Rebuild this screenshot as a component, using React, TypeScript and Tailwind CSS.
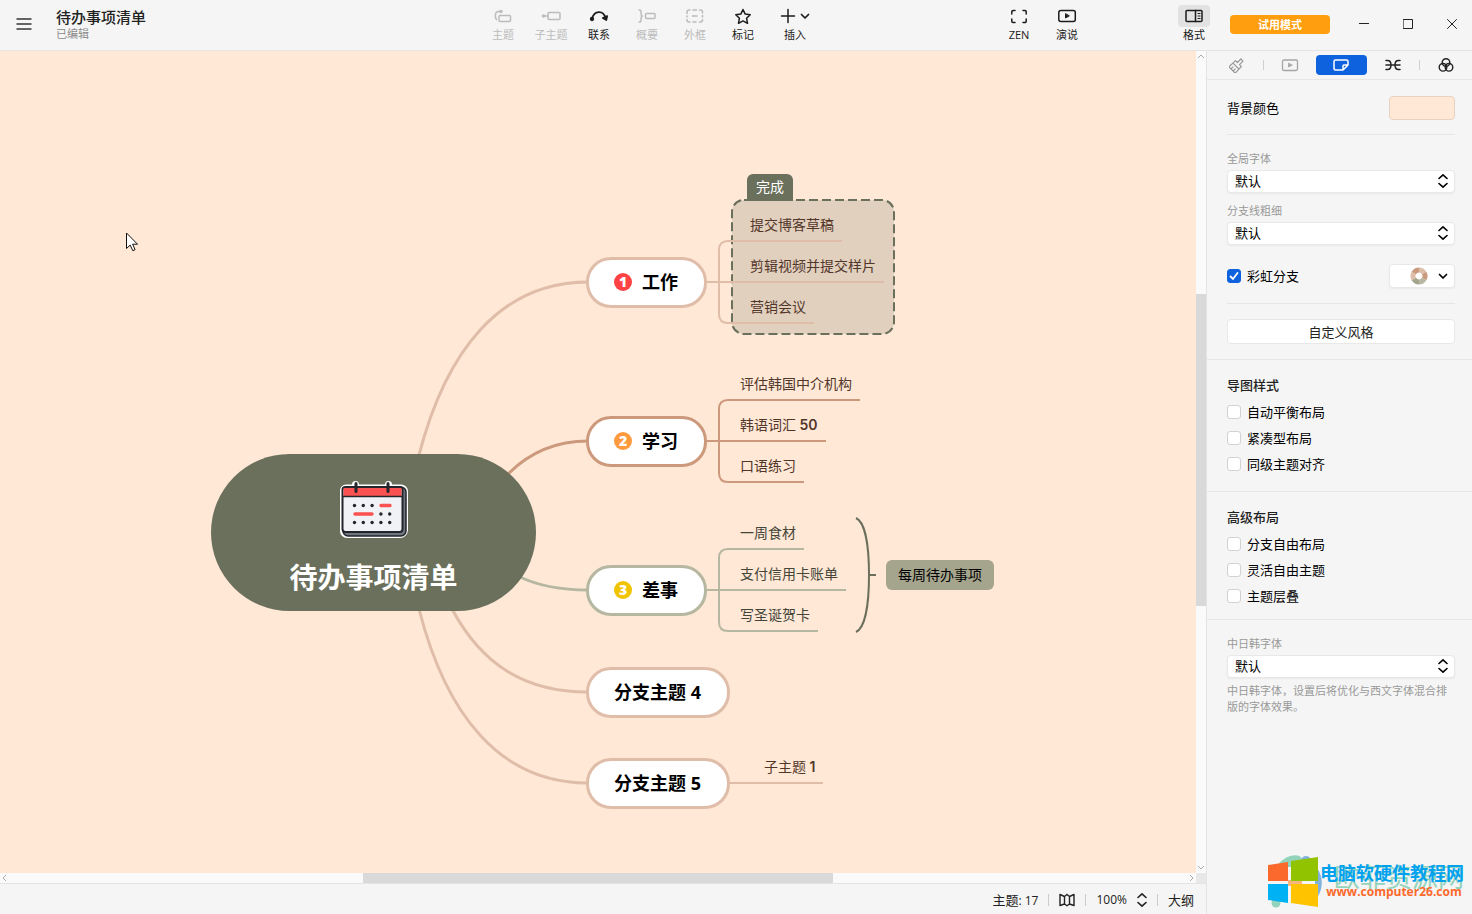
import { useState, type ReactNode } from 'react'

const ORANGE = '#dfbda8'
const CLAY = '#cd997d'
const SAGE = '#b6b7a0'
const OLIVE = '#6b705c'

type Leaf = { text: string; num?: string; x: number; y: number; color: string; ink: string }
type Branch = { text: string; y: number; color: string; badge?: number; badgeColor?: string }

const BRANCHES: Branch[] = [
  { text: '工作', y: 206, color: ORANGE, badge: 1, badgeColor: '#ff4345' },
  { text: '学习', y: 365, color: CLAY, badge: 2, badgeColor: '#ff9a3d' },
  { text: '差事', y: 514, color: SAGE, badge: 3, badgeColor: '#f0c400' },
  { text: '分支主题 4', y: 616, color: ORANGE },
  { text: '分支主题 5', y: 707, color: ORANGE },
]

const LEAVES: Leaf[] = [
  { text: '提交博客草稿', x: 742, y: 190, color: ORANGE, ink: '#53362a' },
  { text: '剪辑视频并提交样片', x: 742, y: 231, color: ORANGE, ink: '#53362a' },
  { text: '营销会议', x: 742, y: 272, color: ORANGE, ink: '#53362a' },
  { text: '评估韩国中介机构', x: 732, y: 349, color: CLAY, ink: '#53362a' },
  { text: '韩语词汇', num: '50', x: 732, y: 390, color: CLAY, ink: '#53362a' },
  { text: '口语练习', x: 732, y: 431, color: CLAY, ink: '#53362a' },
  { text: '一周食材', x: 732, y: 498, color: SAGE, ink: '#45463a' },
  { text: '支付信用卡账单', x: 732, y: 539, color: SAGE, ink: '#45463a' },
  { text: '写圣诞贺卡', x: 732, y: 580, color: SAGE, ink: '#45463a' },
  { text: '子主题', num: '1', x: 756, y: 732, color: ORANGE, ink: '#53362a' },
]

function Icon({ w = 20, h = 16, sw = 1.5, children }: { w?: number; h?: number; sw?: number; children: ReactNode }) {
  return (
    <svg
      width={w}
      height={h}
      viewBox={`0 0 ${w} ${h}`}
      fill="none"
      stroke="currentColor"
      strokeWidth={sw}
      strokeLinecap="round"
      strokeLinejoin="round"
      className="shrink-0"
      aria-hidden="true"
    >
      {children}
    </svg>
  )
}

const TopicIcon = () => (
  <Icon>
    <rect x="6" y="7.5" width="11.5" height="6" rx="1" />
    <path d="M3.5 11.5C1.5 9 2 4 5 3.5H8" />
    <circle cx="8" cy="3.5" r="1" fill="currentColor" />
  </Icon>
)
const SubtopicIcon = () => (
  <Icon>
    <circle cx="2.5" cy="8" r="1" fill="currentColor" />
    <path d="M3 8h4" />
    <rect x="7" y="4.5" width="12" height="7" rx="1" />
  </Icon>
)
const RelationIcon = () => (
  <Icon sw={1.7}>
    <path d="M3 11C5 2 14.500 2 16.500 10" />
    <circle cx="3" cy="11" r="1.300" fill="currentColor" />
    <path d="M13.800 10l3.500 2 .900-4z" fill="currentColor" />
  </Icon>
)
const SummaryIcon = () => (
  <Icon>
    <path d="M2 2c2 0 2 .5 2 2.500s0 3.500 1.500 3.500C4 8 4 9.500 4 11.500S4 14 2 14" />
    <rect x="8.500" y="5.500" width="9.500" height="5" rx="1" />
  </Icon>
)
const BoundaryIcon = () => (
  <Icon>
    <path d="M5 2H4a2 2 0 0 0-2 2v1.500M2 8v1M2 11.500V12a2 2 0 0 0 2 2h1M8 14h3M14.500 14h1a2 2 0 0 0 2-2v-.500M17.500 9V7.500M17.500 5V4a2 2 0 0 0-2-2h-1M11.500 2H8M7.500 8h4.500" />
  </Icon>
)
const StarIcon = () => (
  <Icon>
    <path d="M10 1.500l2.200 4.600 5 .700-3.600 3.500.9 5L10 12.900l-4.500 2.400.9-5L2.800 6.800l5-.700z" />
  </Icon>
)
const ZenIcon = () => (
  <Icon>
    <path d="M6 2.500H4a1.200 1.200 0 0 0-1.200 1.200V6M14 2.500h2a1.200 1.200 0 0 1 1.200 1.200V6M6 14.500H4a1.200 1.200 0 0 1-1.200-1.200V11M14 14.500h2a1.200 1.200 0 0 0 1.200-1.200V11" />
  </Icon>
)
const PlayIcon = () => (
  <Icon>
    <rect x="1.800" y="2.500" width="16.500" height="11" rx="2" />
    <path d="M8.500 6v4l3.500-2z" fill="currentColor" strokeWidth="1" />
  </Icon>
)
const FormatIcon = () => (
  <Icon>
    <rect x="2" y="2.500" width="16" height="11" rx="1" />
    <path d="M11.500 2.500v11" />
    <path d="M14 5.500h2M14 8h2M14 10.500h2" strokeWidth="1" />
  </Icon>
)
const ChevronIcon = () => (
  <Icon w={10} h={8} sw={1.7}>
    <path d="M1.500 2.500L5 6l3.500-3.500" />
  </Icon>
)
const UpDownIcon = () => (
  <Icon w={10} h={16} sw={1.6}>
    <path d="M1 5.500L5 1.800l4 3.700M1 10.500l4 3.700 4-3.700" />
  </Icon>
)

function Tool({ label, icon, disabled = false }: { label: string; icon: ReactNode; disabled?: boolean }) {
  return (
    <button
      type="button"
      disabled={disabled}
      className={`flex w-12 flex-col items-center gap-1 text-[11px] leading-[14px] ${disabled ? 'text-[#bcbcbc]' : 'text-[#1c1c1c]'}`}
    >
      {icon}
      <span>{label}</span>
    </button>
  )
}

function Header() {
  return (
    <header className="flex h-[51px] shrink-0 items-start border-b border-[#e4e4e4] bg-[#f5f5f5] pr-[15px]">
      <div className="flex flex-1 items-start gap-6 pl-4">
        <button type="button" aria-label="菜单" className="mt-4 text-[#333]">
          <Icon w={16}>
            <path d="M.500 3h15M.500 8h15M.500 13h15" strokeLinecap="butt" />
          </Icon>
        </button>
        <div className="pt-[7px]">
          <h1 className="text-[15px] leading-5 font-medium text-[#222]">待办事项清单</h1>
          <p className="text-[11px] leading-3.5 text-[#8a8a8a]">已编辑</p>
        </div>
      </div>
      <nav className="flex pt-2">
        <Tool label="主题" icon={<TopicIcon />} disabled />
        <Tool label="子主题" icon={<SubtopicIcon />} disabled />
        <Tool label="联系" icon={<RelationIcon />} />
        <Tool label="概要" icon={<SummaryIcon />} disabled />
        <Tool label="外框" icon={<BoundaryIcon />} disabled />
        <Tool label="标记" icon={<StarIcon />} />
        <button type="button" className="flex w-14 flex-col items-center gap-1 text-[11px] leading-[14px] text-[#1c1c1c]">
          <span className="flex items-center gap-1">
            <Icon w={16}>
              <path d="M8 1.500v13M1.500 8h13" />
            </Icon>
            <ChevronIcon />
          </span>
          <span>插入</span>
        </button>
      </nav>
      <nav className="ml-[172px] flex pt-2">
        <Tool label="ZEN" icon={<ZenIcon />} />
        <Tool label="演说" icon={<PlayIcon />} />
      </nav>
      <button type="button" className="mt-[5px] ml-[87px] flex w-8 flex-col items-center gap-px text-[11px] leading-[14px] text-[#1c1c1c]">
        <span className="flex h-[22px] w-8 items-center justify-center rounded bg-[#e2e2e2]">
          <FormatIcon />
        </span>
        <span>格式</span>
      </button>
      <button type="button" className="mt-[15px] ml-5 h-[19px] w-[100px] rounded bg-[#ff9f0f] text-[11px] leading-[19px] font-bold text-white">
        试用模式
      </button>
      <div className="mt-4 ml-[29px] flex gap-[34px] text-[#222]">
        <button type="button" aria-label="最小化">
          <Icon w={10} sw={1}>
            <path d="M0 7.500h10" />
          </Icon>
        </button>
        <button type="button" aria-label="最大化">
          <Icon w={10} sw={1}>
            <rect x=".500" y="3.500" width="9" height="9" />
          </Icon>
        </button>
        <button type="button" aria-label="关闭">
          <Icon w={10} sw={1}>
            <path d="M.500 3.500l9 9M9.500 3.500l-9 9" />
          </Icon>
        </button>
      </div>
    </header>
  )
}

function Calendar() {
  const dots = [0, 1, 2, 3, 4]
  return (
    <svg width="70" height="58" viewBox="0 0 70 58" aria-hidden="true">
      <path d="M7 3.500h6a3.500 3.500 0 0 1 7 0h26a3.500 3.500 0 0 1 7 0h9a7 7 0 0 1 7 7V49a8 8 0 0 1-8 8H8a7 7 0 0 1-7-7V9.500a6 6 0 0 1 6-6z" fill="#fff" />
      <rect x="4" y="6" width="63" height="49" rx="5" fill="#6f757d" stroke="#22252b" strokeWidth="1.500" />
      <rect x="3.500" y="6" width="60" height="45" rx="3" fill="#f1f2f6" stroke="#22252b" strokeWidth="2" />
      <path d="M4.500 7h58v8.500h-58z" fill="#fb5150" />
      <path d="M3.500 15.500h60" stroke="#22252b" strokeWidth="1.500" />
      <path d="M17 2.500v8M49 2.500v8" stroke="#22252b" strokeWidth="3" strokeLinecap="round" />
      {dots.map((i) => (
        <g key={i} fill="#22252b">
          {i < 3 && <circle cx={15.5 + i * 8.8} cy="24.500" r="1.700" />}
          {i > 2 && <circle cx={15.5 + i * 8.8} cy="33" r="1.700" />}
          <circle cx={15.5 + i * 8.8} cy="41.500" r="1.700" />
        </g>
      ))}
      <path d="M42 24.500h9M16 33h17" stroke="#fb5150" strokeWidth="3.400" strokeLinecap="round" />
    </svg>
  )
}

function Bracket({ top, mid, bottom, end, color }: { top: number; mid: number; bottom: number; end: number; color: string }) {
  return (
    <path
      d={`M706 ${mid}H${end}M${end} ${top}H728Q719 ${top} 719 ${top + 9}V${bottom - 9}Q719 ${bottom} 728 ${bottom}H${end}`}
      stroke={color}
      strokeWidth="2"
    />
  )
}

function Connectors() {
  return (
    <svg className="absolute inset-0 size-full" fill="none" aria-hidden="true">
      <rect x="732" y="149" width="162" height="134" rx="12" fill="#e1d0be" stroke={OLIVE} strokeWidth="2" strokeDasharray="9 4" />
      <g strokeWidth="3">
        <path d="M419 404C446 300 500 231 588 231" stroke={ORANGE} />
        <path d="M508 423C530 401 555 390 588 390" stroke={CLAY} />
        <path d="M520 526C541 536 562 539 588 539" stroke={SAGE} />
        <path d="M452 558C482 614 525 641 588 641" stroke={ORANGE} />
        <path d="M419 558C446 664 500 732 588 732" stroke={ORANGE} />
      </g>
      <Bracket top={190} mid={231} bottom={272} end={742} color={ORANGE} />
      <Bracket top={349} mid={390} bottom={431} end={732} color={CLAY} />
      <Bracket top={498} mid={539} bottom={580} end={732} color={SAGE} />
      <path d="M730 732h26" stroke={ORANGE} strokeWidth="2" />
      <path d="M856 467C865 471 869 494 869 524S865 577 856 581M869 524h7" stroke={OLIVE} strokeWidth="2" />
    </svg>
  )
}

function MindMap() {
  return (
    <main className="relative min-w-0 flex-1 overflow-hidden bg-[#ffe8d6]">
      <Connectors />
      <div className="absolute top-[403px] left-[211px] flex h-[157px] w-[325px] flex-col items-center gap-5 rounded-full bg-[#6b705c] pt-[27px]">
        <Calendar />
        <span className="text-[28px] leading-9 font-bold text-white">待办事项清单</span>
      </div>
      {BRANCHES.map((b) => (
        <div
          key={b.text}
          className="absolute left-[586px] flex h-[51px] items-center gap-2.5 rounded-[25px] border-[3px] bg-white pr-[26px] pb-0.5 pl-[25px] text-lg font-bold whitespace-nowrap text-black"
          style={{ top: b.y, borderColor: b.color }}
        >
          {b.badge && (
            <span
              className="flex size-[18px] items-center justify-center rounded-full text-sm leading-[18px] font-extrabold text-white"
              style={{ backgroundColor: b.badgeColor }}
            >
              {b.badge}
            </span>
          )}
          <span>{b.text}</span>
        </div>
      ))}
      {LEAVES.map((l) => (
        <div
          key={l.text}
          className="absolute h-[29px] border-b-2 px-2 text-sm leading-6 whitespace-nowrap"
          style={{ left: l.x, top: l.y - 28, borderColor: l.color, color: l.ink }}
        >
          {l.text}
          {l.num && <span className="font-[Inter] font-semibold"> {l.num}</span>}
        </div>
      ))}
      <div className="absolute top-[123px] left-[747px] h-[27px] w-[46px] rounded-t-md bg-[#6b705c] text-center text-sm leading-[25px] text-white">
        完成
      </div>
      <div className="absolute top-[509px] left-[886px] h-[30px] w-[108px] rounded-md bg-[#a5a58d] text-center text-sm leading-[30px] text-black">
        每周待办事项
      </div>
      <svg className="absolute top-[181px] left-[126px]" width="13" height="20" viewBox="0 0 13 20" aria-hidden="true">
        <path d="M.500 1v15.500l3.700-3.400 2.600 5.600 2.300-1-2.500-5.500H11.500z" fill="#fff" stroke="#111" strokeWidth="1" />
      </svg>
    </main>
  )
}

function Select({ id, label }: { id: string; label: string }) {
  return (
    <>
      <label htmlFor={id} className="block text-[11px] leading-4 text-[#999]">
        {label}
      </label>
      <div className="relative mt-[3px] h-[23px]">
        <select id={id} className="block h-full w-full appearance-none rounded border border-[#e8e8e8] bg-white pb-0.5 pl-[7px] text-[13px] leading-5 text-black shadow-xs">
          <option>默认</option>
        </select>
        <span className="pointer-events-none absolute top-[3px] right-[7px]">
          <UpDownIcon />
        </span>
      </div>
    </>
  )
}

function Check({ label, on = false }: { label: string; on?: boolean }) {
  const [checked, setChecked] = useState(on)
  return (
    <label className="flex h-[26px] items-center gap-1.5 text-[13px] leading-5 text-black">
      <span className="relative flex">
        <input
          type="checkbox"
          checked={checked}
          onChange={(e) => setChecked(e.target.checked)}
          className="size-3.5 appearance-none rounded-[3px] border border-[#d2d2d2] bg-white checked:border-[#0f62de] checked:bg-[#0f62de]"
        />
        {checked && (
          <svg className="pointer-events-none absolute inset-0" width="14" height="14" viewBox="0 0 14 14" fill="none" aria-hidden="true">
            <path d="M3.500 7.500L6 10l4.500-6" stroke="#fff" strokeWidth="1.800" strokeLinecap="round" />
          </svg>
        )}
      </span>
      {label}
    </label>
  )
}

function Tabs() {
  const tab = 'flex h-5 flex-1 items-center justify-center rounded'
  return (
    <div className="flex h-[29px] shrink-0 items-center border-b border-[#e6e6e6] pl-1 text-[#222]">
      <button type="button" aria-label="样式" className={`${tab} text-[#999]`}>
        <Icon w={16} sw={1.2}>
          <path transform="rotate(45 8 8)" d="M6.500 1h3v5h2.700v3.500H3.800V6h2.700zM3.800 9.500L3.500 15h9l-.300-5.500M6.500 15v-2.800M9.500 15v-2.800" />
        </Icon>
      </button>
      <span className="h-2.5 w-px bg-[#d0d0d0]" />
      <button type="button" aria-label="演说" className={`${tab} text-[#a5a5a5]`}>
        <Icon w={18} sw={1.3}>
          <rect x="1.500" y="3" width="15" height="10.500" rx="1.500" />
          <path d="M7.500 6.500v3.500l3.500-1.800z" fill="currentColor" strokeWidth=".800" />
        </Icon>
      </button>
      <button type="button" aria-label="画布" className={`${tab} bg-[#0f62de] text-white`}>
        <Icon w={18}>
          <path d="M3.500 3h11A1.500 1.500 0 0 1 16 4.500V8l-5 5H3.500A1.500 1.500 0 0 1 2 11.500v-7A1.500 1.500 0 0 1 3.500 3zM16 8h-4a1 1 0 0 0-1 1v4" />
        </Icon>
      </button>
      <button type="button" aria-label="结构" className={tab}>
        <Icon w={18}>
          <path d="M2 3.500h1.500C6 3.500 7 5.500 7 8s-1 4.500-3.500 4.500H2M2 8h14M16 3.500h-1.500C12 3.500 11 5.500 11 8s1 4.500 3.500 4.500H16" />
        </Icon>
      </button>
      <span className="h-2.5 w-px bg-[#d0d0d0]" />
      <button type="button" aria-label="配色" className={tab}>
        <Icon w={16} sw={1.4}>
          <circle cx="8" cy="5.500" r="3.800" />
          <circle cx="5" cy="10.300" r="3.800" />
          <circle cx="11" cy="10.300" r="3.800" />
        </Icon>
      </button>
    </div>
  )
}

function Panel() {
  return (
    <aside className="relative flex w-[266px] shrink-0 flex-col border-l border-[#e4e4e4] bg-[#f5f5f5]">
      <Tabs />
      <section className="border-b border-[#e6e6e6] pr-[17px] pb-[15px] pl-5">
        <div className="flex items-center justify-between border-b border-[#e6e6e6] pt-4 pb-3.5 text-[13px] leading-6 text-black">
          背景颜色
          <button type="button" aria-label="背景颜色" className="h-6 w-[66px] rounded border border-[#e8d2c2] bg-[#ffe8d6]" />
        </div>
        <div className="pt-4">
          <Select id="global-font" label="全局字体" />
        </div>
        <div className="pt-2.5">
          <Select id="line-width" label="分支线粗细" />
        </div>
        <div className="mt-[18px] flex items-center justify-between border-b border-[#e6e6e6] pb-3.5">
          <Check label="彩虹分支" on />
          <button type="button" aria-label="彩虹配色" className="flex h-6 w-[66px] items-center justify-end gap-2.5 rounded border border-[#e8e8e8] bg-white pr-1.5 shadow-xs">
            <svg width="18" height="18" viewBox="0 0 18 18" fill="none" strokeWidth="5" aria-hidden="true">
              <path d="M9 3A6 6 0 0 1 14.200 6" stroke="#ddbea9" />
              <path d="M14.200 6A6 6 0 0 1 14.200 12" stroke="#cb997e" />
              <path d="M14.200 12A6 6 0 0 1 9 15" stroke="#b7b7a4" />
              <path d="M9 15A6 6 0 0 1 3.800 12" stroke="#a5a58d" />
              <path d="M3.800 12A6 6 0 0 1 3.800 6" stroke="#ddbea9" />
              <path d="M3.800 6A6 6 0 0 1 9 3" stroke="#cb997e" />
            </svg>
            <ChevronIcon />
          </button>
        </div>
        <button type="button" className="mt-[15px] block h-[25px] w-full rounded border border-[#e8e8e8] bg-white text-[13px] leading-5 text-[#222]">
          自定义风格
        </button>
      </section>
      <section className="border-b border-[#e6e6e6] pt-[15px] pb-3.5 pl-5">
        <h2 className="mb-1 text-[13px] leading-5 font-medium text-[#222]">导图样式</h2>
        <Check label="自动平衡布局" />
        <Check label="紧凑型布局" />
        <Check label="同级主题对齐" />
      </section>
      <section className="border-b border-[#e6e6e6] pt-[15px] pb-2.5 pl-5">
        <h2 className="mb-1 text-[13px] leading-5 font-medium text-[#222]">高级布局</h2>
        <Check label="分支自由布局" />
        <Check label="灵活自由主题" />
        <Check label="主题层叠" />
      </section>
      <section className="pt-4 pr-[17px] pl-5">
        <Select id="cjk-font" label="中日韩字体" />
        <p className="mt-[5px] text-[11px] leading-4 text-[#999]">中日韩字体，设置后将优化与西文字体混合排版的字体效果。</p>
      </section>
      <Watermark />
    </aside>
  )
}

function Watermark() {
  return (
    <div className="absolute right-2 bottom-1.5 flex items-center gap-0.5">
      <svg width="50" height="52" viewBox="0 0 50 52" className="overflow-visible" aria-hidden="true">
        <path d="M10 9C18-2 32-3 34 3v8H10z" fill="#93d3bb" />
        <circle cx="38" cy="5" r="5" fill="#7fb2dc" />
        <path d="M47 10c10 10 8 26 0 34z" fill="#7fb2dc" />
        <circle cx="8" cy="47" r="4.500" fill="#93d3bb" />
        <path d="M20 24h14v6H20z" fill="#f5b57c" />
        <path d="M0 9l20-3v19H0z" fill="#fb692c" />
        <path d="M23 5l27-4v24H23z" fill="#92c300" />
        <path d="M0 28h20v19L0 44z" fill="#00b1f3" />
        <path d="M23 28h27v23l-27-4z" fill="#ffc300" />
      </svg>
      <div className="relative w-36 text-center whitespace-nowrap">
        <span className="absolute top-0.5 right-0 text-[26px] leading-6 text-[#93d3bb]" aria-hidden="true">
          欧菲资源网
        </span>
        <p className="relative text-lg leading-5 font-bold text-[#00a2ef]">电脑软硬件教程网</p>
        <p className="relative pl-1 font-['Open_Sans'] text-xs leading-[18px] font-bold text-[#fb692c]">www.computer26.com</p>
      </div>
    </div>
  )
}

function Footer() {
  return (
    <footer className="flex h-[31px] shrink-0 items-center justify-end gap-2.5 border-t border-[#e4e4e4] bg-[#f5f5f5] pt-0.5 pr-3 text-[13px] leading-5 text-[#222]">
      <span>
        主题<span className="text-xs">: 17</span>
      </span>
      <span className="h-3 w-px bg-[#ccc]" />
      <button type="button" aria-label="导航图">
        <Icon w={16} sw={1.4}>
          <path d="M1 2.500l4.500 2L8 2.500M1 2.500v11l4.500-1.500L8 13.800l2.500-1.800 4.500 1.500v-11l-4.500 2L8 2.500M5.500 4.500V12M10.500 4.500V12" />
        </Icon>
      </button>
      <span className="h-3 w-px bg-[#ccc]" />
      <button type="button" className="flex items-center gap-2.5 text-xs leading-5">
        100%
        <UpDownIcon />
      </button>
      <span className="h-3 w-px bg-[#ccc]" />
      <button type="button">大纲</button>
    </footer>
  )
}

function Arrow({ d }: { d: string }) {
  return (
    <svg width="10" height="10" viewBox="0 0 10 10" fill="none" stroke="#aaa" className="shrink-0" aria-hidden="true">
      <path d={d} />
    </svg>
  )
}

export default function App() {
  return (
    <div className="flex h-screen flex-col overflow-hidden bg-[#f5f5f5] font-['Open_Sans','Noto_Sans_CJK_SC',sans-serif]">
      <Header />
      <div className="flex min-h-0 flex-1">
        <div className="flex min-w-0 flex-1 flex-col">
          <div className="flex min-h-0 flex-1">
            <MindMap />
            <div className="flex w-2.5 shrink-0 flex-col bg-[#fafafa]">
              <Arrow d="M2 7l3-3 3 3" />
              <span className="grow-[29]" />
              <span className="grow-[39] bg-[#d9d9d9]" />
              <span className="grow-[32]" />
              <Arrow d="M2 3l3 3 3-3" />
            </div>
          </div>
          <div className="flex h-2.5 shrink-0">
            <div className="flex flex-1 bg-[#fafafa]">
              <Arrow d="M6 2L3 5l3 3" />
              <span className="grow-[30]" />
              <span className="h-2.5 grow-[40] bg-[#d9d9d9]" />
              <span className="grow-[30]" />
              <Arrow d="M4 2l3 3-3 3" />
            </div>
            <span className="w-2.5 bg-[#e8e8e8]" />
          </div>
          <Footer />
        </div>
        <Panel />
      </div>
    </div>
  )
}
